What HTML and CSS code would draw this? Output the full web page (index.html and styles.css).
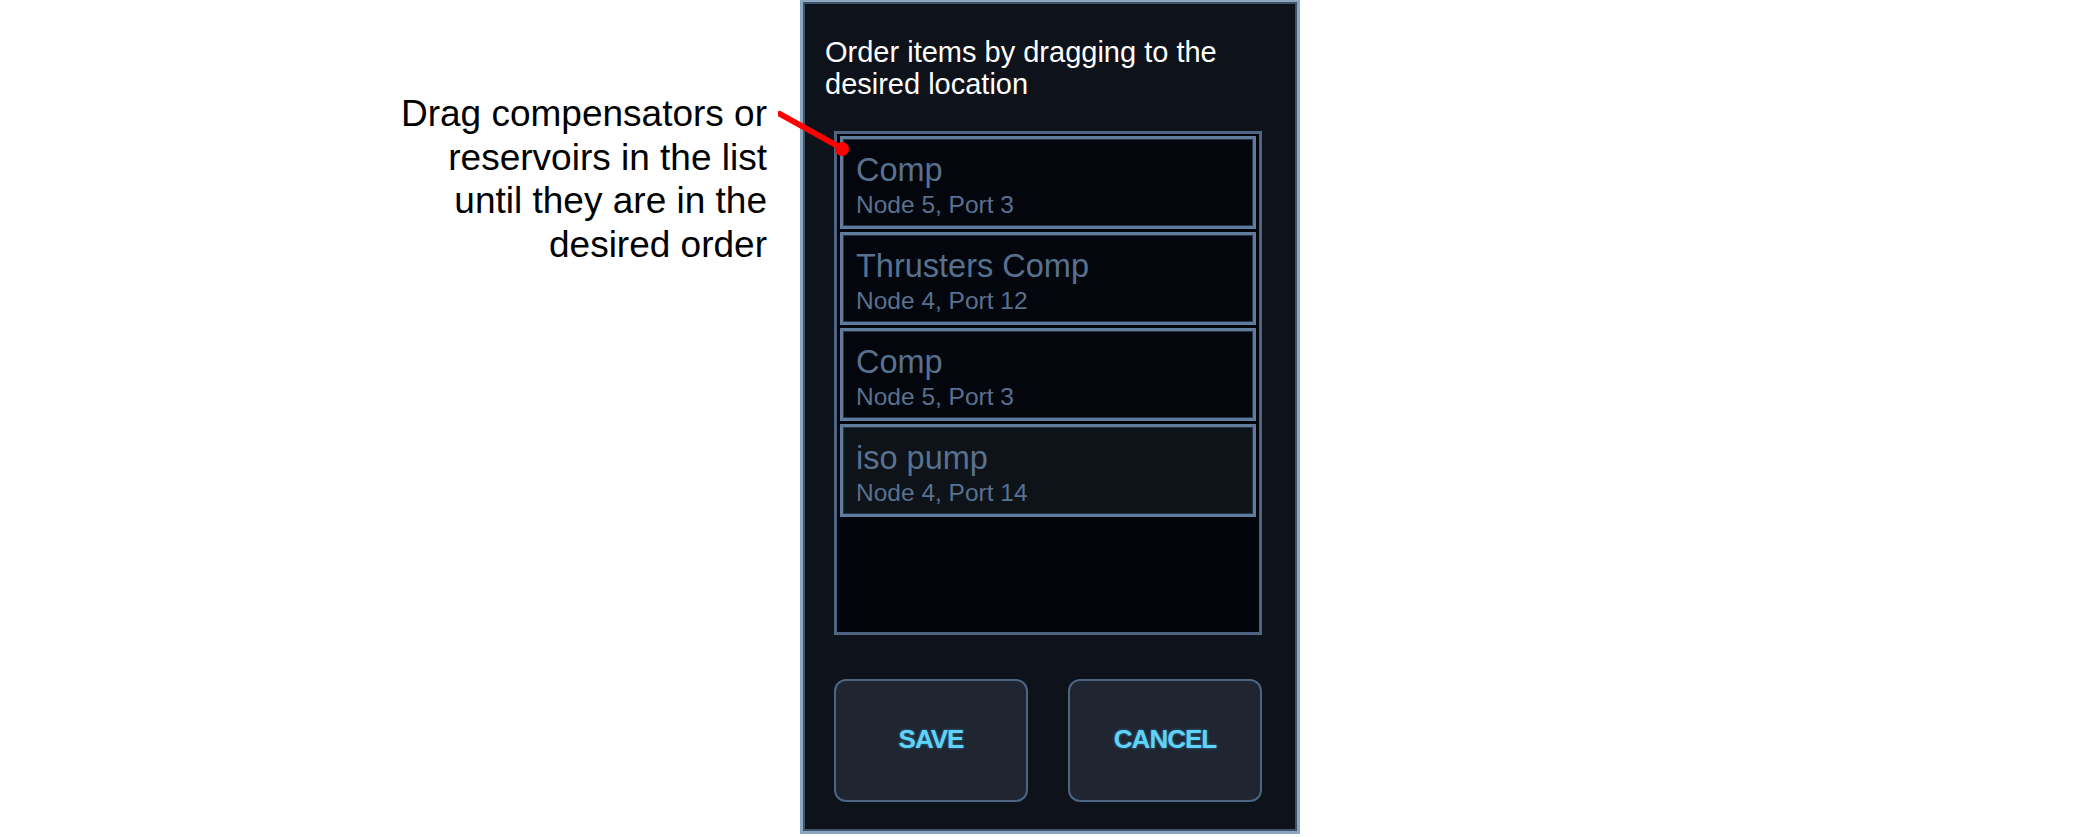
FILE: index.html
```html
<!DOCTYPE html>
<html>
<head>
<meta charset="utf-8">
<link rel="stylesheet" href="styles.css">
</head>
<body>
<div class="page">
  <div class="note">Drag compensators or<br>reservoirs in the list<br>until they are in the<br>desired order</div>
  <div class="panel">
    <div class="title">Order items by dragging to the<br>desired location</div>
    <div class="list">
      <div class="item"><div class="name">Comp</div><div class="sub">Node 5, Port 3</div></div>
      <div class="item"><div class="name">Thrusters Comp</div><div class="sub">Node 4, Port 12</div></div>
      <div class="item"><div class="name">Comp</div><div class="sub">Node 5, Port 3</div></div>
      <div class="item item-alt"><div class="name">iso pump</div><div class="sub">Node 4, Port 14</div></div>
    </div>
    <div class="buttons">
      <div class="btn">SAVE</div>
      <div class="btn">CANCEL</div>
    </div>
  </div>
  <svg class="pointer" width="80" height="60" viewBox="0 0 80 60">
    <line x1="2" y1="5" x2="65" y2="40" stroke="#ff0000" stroke-width="6" stroke-linecap="round"/>
    <circle cx="64" cy="40" r="7" fill="#ff0000"/>
  </svg>
</div>
</body>
</html>
```
FILE: styles.css
```css
* {
  box-sizing: border-box;
}
html, body {
  margin: 0;
  padding: 0;
  background: #ffffff;
}
.page {
  position: relative;
  display: flex;
  align-items: flex-start;
  width: 2100px;
  height: 837px;
  font-family: "Liberation Sans", Arial, sans-serif;
}
.note {
  width: 767px;
  padding-top: 92px;
  text-align: right;
  font-size: 37px;
  line-height: 43.5px;
  color: #000000;
}
.panel {
  margin-left: 33px;
  width: 500px;
  height: 834px;
  padding: 34px 35px 28px 31px;
  background: #0e121a;
  border: 3px solid #8ba6bf;
  border-top-width: 2px;
  box-shadow: inset 0 0 0 2px #3f536a;
  display: flex;
  flex-direction: column;
}
.title {
  margin-left: -9px;
  font-size: 29px;
  line-height: 32px;
  color: #ffffff;
  height: 64px;
  flex: none;
}
.list {
  margin-top: 31px;
  height: 504px;
  flex: none;
  border: 3px solid #4d6482;
  background: #02050b;
  padding: 2px 3px;
  display: flex;
  flex-direction: column;
  gap: 3px;
}
.item {
  height: 93px;
  flex: none;
  border: 3px solid #5f7c9c;
  box-shadow: inset 0 0 0 1px #26344a;
  background: #03060d;
  padding: 0 13px;
  color: #58718f;
}
.item-alt {
  background: #0e1219;
}
.name {
  margin-top: 14px;
  font-size: 32.5px;
  line-height: 35px;
}
.sub {
  margin-top: 4px;
  font-size: 24.5px;
  line-height: 26px;
}
.buttons {
  margin-top: 44px;
  display: flex;
  justify-content: space-between;
  flex: none;
}
.btn {
  width: 194px;
  height: 123px;
  padding-bottom: 3px;
  border: 2px solid #4c6583;
  border-radius: 12px;
  background: #1f2531;
  display: flex;
  align-items: center;
  justify-content: center;
  font-size: 26px;
  font-weight: bold;
  letter-spacing: -1px;
  color: #5ed3fb;
  text-shadow: 0 0 3px rgba(94, 211, 251, 0.5);
}
.pointer {
  position: absolute;
  left: 778px;
  top: 109px;
}
```
